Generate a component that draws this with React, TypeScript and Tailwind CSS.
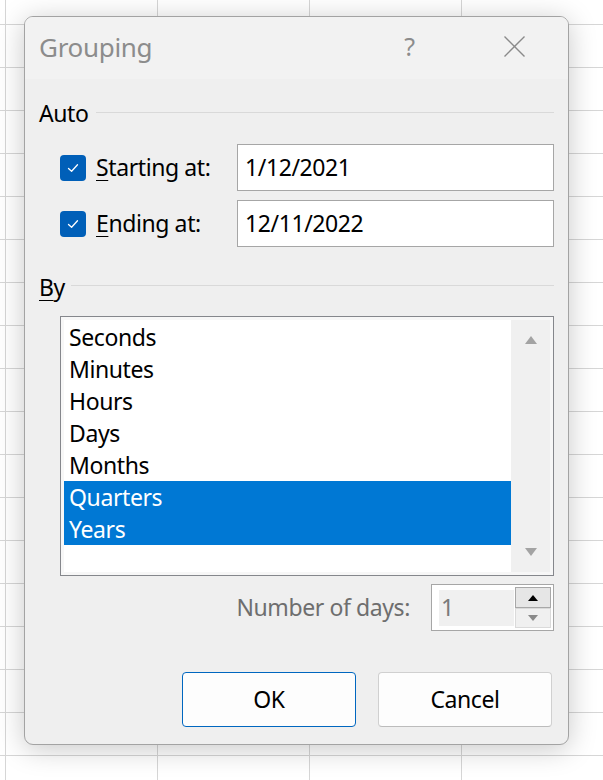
import React from "react";

const font = { fontFamily: '"Noto Sans", "Open Sans", sans-serif' };

function Check() {
  return (
    <div className="w-[26px] h-[26px] rounded-[4px] bg-[#005fb8] flex items-center justify-center shrink-0">
      <svg width="14" height="14" viewBox="0 0 14 14" fill="none">
        <path d="M2.5 7.5 L5.6 10.3 L11.5 3.8" stroke="white" strokeWidth="1.3" strokeLinecap="round" strokeLinejoin="round" />
      </svg>
    </div>
  );
}

const items = ["Seconds", "Minutes", "Hours", "Days", "Months", "Quarters", "Years"];

export default function App() {
  return (
    <div
      className="w-[603px] h-[780px] overflow-hidden pt-[16px] pl-[24px] bg-white bg-[linear-gradient(to_right,#d6d6d6_1px,transparent_1px),linear-gradient(to_bottom,#d6d6d6_1px,transparent_1px)] bg-[size:152px_43px] bg-[position:5px_24px]"
      style={font}
    >
      <div className="w-[545px] h-[729px] rounded-[9px] border border-[#a3a3a3] bg-[#efefef] shadow-[0_4px_28px_rgba(0,0,0,0.22)] flex flex-col overflow-hidden">
        {/* Title bar */}
        <div className="h-[62px] bg-[#f2f2f2] flex items-center pl-[14px] pr-[43px] shrink-0">
          <div className="text-[26px] tracking-[-0.3px] text-[#8c8c8c] leading-none flex-1 -mt-[3px]">Grouping</div>
          <div className="text-[25px] text-[#8c8c8c] leading-none mr-[89px] -mt-[3px]">?</div>
          <svg width="21" height="21" viewBox="0 0 21 21" className="-mt-[4px]">
            <path d="M0.5 0.5 L20.5 20.5 M20.5 0.5 L0.5 20.5" stroke="#8a8a8a" strokeWidth="1.4" />
          </svg>
        </div>

        <div className="px-[14px] flex flex-col text-[23px] tracking-[-0.4px] text-black leading-none">
          {/* Auto */}
          <div className="mt-[20px] h-[28px] flex items-center">
            <span>Auto</span>
            <div className="flex-1 h-px bg-[#d9d9d9] ml-[7px] -mt-[2px]" />
          </div>

          {/* Starting */}
          <div className="mt-[17px] h-[47px] flex items-center pl-[21px]">
            <Check />
            <span className="ml-[10px] flex-1">
              <span className="underline underline-offset-[4px] decoration-1">S</span>tarting at:
            </span>
            <div className="w-[317px] h-[47px] bg-white border border-[#a6a6a6] flex items-center pl-[7px]">1/12/2021</div>
          </div>

          {/* Ending */}
          <div className="mt-[9px] h-[47px] flex items-center pl-[21px]">
            <Check />
            <span className="ml-[10px] flex-1">
              <span className="underline underline-offset-[4px] decoration-1">E</span>nding at:
            </span>
            <div className="w-[317px] h-[47px] bg-white border border-[#a6a6a6] flex items-center pl-[7px]">12/11/2022</div>
          </div>

          {/* By */}
          <div className="mt-[26px] h-[28px] flex items-center">
            <span>
              <span className="underline underline-offset-[4px] decoration-1">B</span>y
            </span>
            <div className="flex-1 h-px bg-[#d9d9d9] ml-[6px] -mt-[3px]" />
          </div>

          {/* Listbox */}
          <div className="mt-[15px] ml-[21px] h-[260px] border border-[#85878c] bg-[#f7f7f7] p-[3px] flex">
            <div className="flex-1 bg-white pt-[1px]">
              {items.map((it, i) => (
                <div
                  key={it}
                  className={
                    "h-[32px] flex items-center pl-[5px] " +
                    (i >= 5 ? "bg-[#0078d4] text-white" : "")
                  }
                >
                  {it}
                </div>
              ))}
            </div>
            <div className="w-[39px] bg-[#f0f0f0] flex flex-col items-center justify-between pt-[16px] pb-[16px]">
              <svg width="12" height="8" viewBox="0 0 12 8"><path d="M6 0 L12 8 L0 8 Z" fill="#a3a3a3" /></svg>
              <svg width="12" height="8" viewBox="0 0 12 8"><path d="M0 0 L12 0 L6 8 Z" fill="#a3a3a3" /></svg>
            </div>
          </div>

          {/* Number of days */}
          <div className="mt-[8px] h-[47px] flex items-center justify-end">
            <span className="text-[#6e6e6e] mr-[21px]">Number of days:</span>
            <div className="w-[123px] h-[47px] bg-white border border-[#a6a6a6] flex items-center pl-[7px] pr-[2px]">
              <div className="w-[75px] h-[36px] bg-[#f0f0f0] flex items-center pl-[2px] text-[#7a7a7a]">1</div>
              <div className="flex flex-col ml-[1px]">
                <div className="w-[36px] h-[21px] bg-[#e6e6e6] border border-[#a8a8a8] flex items-center justify-center">
                  <svg width="10" height="6" viewBox="0 0 10 6"><path d="M5 0 L10 6 L0 6 Z" fill="#000" /></svg>
                </div>
                <div className="w-[36px] h-[20px] bg-[#f0f0f0] border border-[#dadada] flex items-center justify-center">
                  <svg width="10" height="6" viewBox="0 0 10 6"><path d="M0 0 L10 0 L5 6 Z" fill="#8a8a8a" /></svg>
                </div>
              </div>
            </div>
          </div>

          {/* Buttons */}
          <div className="mt-[41px] flex justify-end gap-[22px] pr-[2px]">
            <div className="w-[174px] h-[55px] rounded-[4px] border border-[#0067c0] bg-[#fdfdfd] flex items-center justify-center">OK</div>
            <div className="w-[174px] h-[55px] rounded-[4px] border border-[#d0d0d0] border-b-[#bcbcbc] bg-[#fdfdfd] flex items-center justify-center">Cancel</div>
          </div>
        </div>
      </div>
    </div>
  );
}
